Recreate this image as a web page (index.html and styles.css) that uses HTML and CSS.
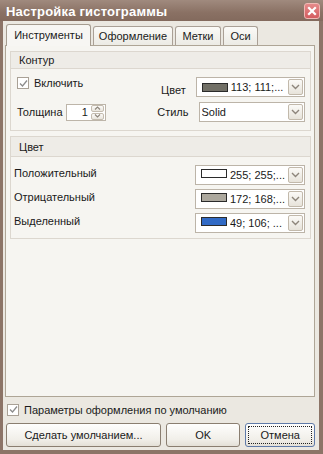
FILE: index.html
```html
<!DOCTYPE html>
<html>
<head>
<meta charset="utf-8">
<link rel="stylesheet" href="styles.css">
</head>
<body>
<div class="window">
  <div class="titlebar">
    <span class="title">Настройка гистограммы</span>
    <span class="close"><svg width="10" height="10" viewBox="0 0 10 10"><path d="M2 2 L8 8 M8 2 L2 8" stroke="#fff" stroke-width="2.2" stroke-linecap="square"/></svg></span>
  </div>
  <div class="client">
    <div class="tabs">
      <div class="tab active t1">Инструменты</div>
      <div class="tab t2">Оформление</div>
      <div class="tab t3">Метки</div>
      <div class="tab t4">Оси</div>
    </div>
    <div class="panel">
      <div class="group g1">
        <div class="ghead">Контур</div>
        <div class="gbody contour">
          <div class="row r1">
            <label class="chk"><span class="box"><svg width="9" height="9" viewBox="0 0 9 9"><path d="M1 4.5 L3.5 7 L8 1.5" fill="none" stroke="#8c8c8c" stroke-width="1.3"/></svg></span>Включить</label>
            <span class="lbl">Цвет</span>
            <div class="combo"><span class="sw" style="background:#716f66"></span><span class="ctext">113; 111;...</span><span class="dd"><svg width="9" height="6" viewBox="0 0 9 6"><path d="M1 1 L4.5 4.5 L8 1" fill="none" stroke="#8d857b" stroke-width="1.4"/></svg></span></div>
          </div>
          <div class="row r2">
            <span class="lbl2">Толщина</span>
            <div class="spin"><span class="sval">1</span><span class="sbtns"><span class="sb"><svg width="7" height="4" viewBox="0 0 7 4"><path d="M1 3.5 L3.5 1 L6 3.5" fill="none" stroke="#8d857b" stroke-width="1.1"/></svg></span><span class="sb"><svg width="7" height="4" viewBox="0 0 7 4"><path d="M1 0.5 L3.5 3 L6 0.5" fill="none" stroke="#8d857b" stroke-width="1.1"/></svg></span></span></div>
            <span class="lbl">Стиль</span>
            <div class="combo"><span class="ctext solid">Solid</span><span class="dd"><svg width="9" height="6" viewBox="0 0 9 6"><path d="M1 1 L4.5 4.5 L8 1" fill="none" stroke="#8d857b" stroke-width="1.4"/></svg></span></div>
          </div>
        </div>
      </div>
      <div class="group g2">
        <div class="ghead">Цвет</div>
        <div class="gbody colors">
          <div class="crow"><span>Положительный</span><div class="combo"><span class="sw" style="background:#ffffff"></span><span class="ctext">255; 255;...</span><span class="dd"><svg width="9" height="6" viewBox="0 0 9 6"><path d="M1 1 L4.5 4.5 L8 1" fill="none" stroke="#8d857b" stroke-width="1.4"/></svg></span></div></div>
          <div class="crow"><span>Отрицательный</span><div class="combo"><span class="sw" style="background:#aca89e"></span><span class="ctext">172; 168;...</span><span class="dd"><svg width="9" height="6" viewBox="0 0 9 6"><path d="M1 1 L4.5 4.5 L8 1" fill="none" stroke="#8d857b" stroke-width="1.4"/></svg></span></div></div>
          <div class="crow"><span>Выделенный</span><div class="combo"><span class="sw" style="background:#316ac5"></span><span class="ctext">49; 106; ...</span><span class="dd"><svg width="9" height="6" viewBox="0 0 9 6"><path d="M1 1 L4.5 4.5 L8 1" fill="none" stroke="#8d857b" stroke-width="1.4"/></svg></span></div></div>
        </div>
      </div>
    </div>
    <label class="chk def"><span class="box"><svg width="9" height="9" viewBox="0 0 9 9"><path d="M1 4.5 L3.5 7 L8 1.5" fill="none" stroke="#8c8c8c" stroke-width="1.3"/></svg></span>Параметры оформления по умолчанию</label>
    <div class="buttons">
      <div class="btn b1">Сделать умолчанием...</div>
      <div class="btn b2">OK</div>
      <div class="btn b3 focus"><span>Отмена</span></div>
    </div>
  </div>
</div>
</body>
</html>
```
FILE: styles.css
```css
* { box-sizing: border-box; }
html, body { margin: 0; padding: 0; }
body { width: 323px; height: 454px; overflow: hidden; font-family: "Liberation Sans", Arial, sans-serif; font-size: 11px; color: #1a1a1a; }
.window {
  width: 323px; height: 454px;
  background: #8c7467;
  padding: 0 4px 4px 3px;
  display: flex; flex-direction: column;
}
.titlebar {
  height: 22px; margin: 0 -4px 0 -3px; padding: 0 3px 0 6px;
  background: linear-gradient(#a08a7e, #8a7164 60%, #836a5d);
  display: flex; align-items: center; justify-content: space-between;
}
.title { color: #fff; font-weight: bold; font-size: 13px; letter-spacing: 0.2px; padding-top: 1px; }
.close {
  width: 16px; height: 16px; border-radius: 3px;
  background: linear-gradient(#e58a8a, #d45d5f);
  border: 1px solid #f0b8b4;
  display: flex; align-items: center; justify-content: center;
}
.client {
  flex: 1; background: #ebe8e1;
  padding: 3px 4px 3px 2px;
  display: flex; flex-direction: column;
}
.tabs { display: flex; align-items: flex-end; height: 21px; padding-left: 3px; gap: 2px; position: relative; z-index: 2; }
.tab {
  height: 19px; padding: 0;
  border: 1px solid #aaa096; border-bottom: none; border-radius: 3px 3px 0 0;
  background: linear-gradient(#fbfaf7, #ecebe5);
  line-height: 18px; color: #1a1a1a; text-align: center;
}
.t1 { width: 85px; }
.t2 { width: 80px; }
.t3 { width: 46px; }
.t4 { width: 35px; }
.tab.active {
  height: 22px; margin-left: -2px;
  background: #f7f6f3; border-color: #a59c90; margin-bottom: -1px; line-height: 21px;
}
.panel {
  height: 352px; background: #f6f5f1;
  border: 1px solid #aea596;
  padding: 5px 3px 0 4px;
  display: flex; flex-direction: column; gap: 5px;
}
.group { border: 1px solid #dcd7cf; background: #f6f5f1; }
.ghead { padding-left: 8px; background: #eeece7; border-bottom: 1px solid #dcd7cf; display: flex; align-items: center; }
.g1 .ghead { height: 17px; }
.g2 .ghead { height: 20px; }
.gbody.contour { padding: 8px 5px 8px 6px; display: flex; flex-direction: column; gap: 5px; }
.row { display: flex; align-items: center; }
.chk { display: flex; align-items: center; gap: 5px; }
.box { width: 12px; height: 12px; border: 1px solid #a9a196; background: #fff; display: flex; align-items: center; justify-content: center; }
.r1 .chk { width: 128px; align-self: flex-start; }
.lbl { width: 42px; text-align: right; margin-right: 10px; }
.r1 .lbl { margin-top: 6px; }
.lbl2 { width: 51px; }
.spin { width: 41px; height: 17px; border: 1px solid #bdb5a9; background: #fff; display: flex; align-items: center; justify-content: flex-end; padding-right: 1px; margin-right: 42px; }
.sval { margin-right: 3px; }
.sbtns { display: flex; flex-direction: column; gap: 1px; }
.sb { width: 13px; height: 7px; border: 1px solid #c4bcaf; border-radius: 2px; background: linear-gradient(#fbfaf8, #e9e5dd); display: flex; align-items: center; justify-content: center; }
.combo { width: 110px; height: 20px; border: 1px solid #bcb4a8; background: #fff; display: flex; align-items: center; padding: 0 1px 0 5px; }
.sw { width: 26px; height: 9px; border: 1px solid #2b2b2b; margin-right: 3px; flex: none; }
.ctext { flex: 1; white-space: nowrap; overflow: hidden; }
.ctext.solid { margin-left: -3px; }
.dd { width: 15px; height: 16px; border: 1px solid #c2b9ab; border-radius: 2px; background: linear-gradient(#fbfaf7, #e7e3da); display: flex; align-items: center; justify-content: center; flex: none; }
.gbody.colors { padding: 8px 5px 5px 3px; display: flex; flex-direction: column; gap: 4px; }
.crow { display: flex; align-items: center; justify-content: space-between; }
.crow span:first-child { margin-top: -4px; }
.def { margin: 6px 0 0 2px; height: 13px; }
.buttons { display: flex; gap: 5px; margin-top: 7px; padding-left: 0; }
.btn {
  height: 24px; border: 1px solid #8a7e70; border-radius: 3px;
  background: linear-gradient(#fefefd, #f1efe9 70%, #e4e0d7);
  display: flex; align-items: center; justify-content: center;
}
.b1 { width: 156px; margin-left: 1px; }
.b2 { width: 75px; }
.b3 { width: 70px; border-color: #5f7aa8; padding: 2px; }
.b3 span { width: 100%; height: 100%; border: 1px dotted #222; display: flex; align-items: center; justify-content: center; }
```
